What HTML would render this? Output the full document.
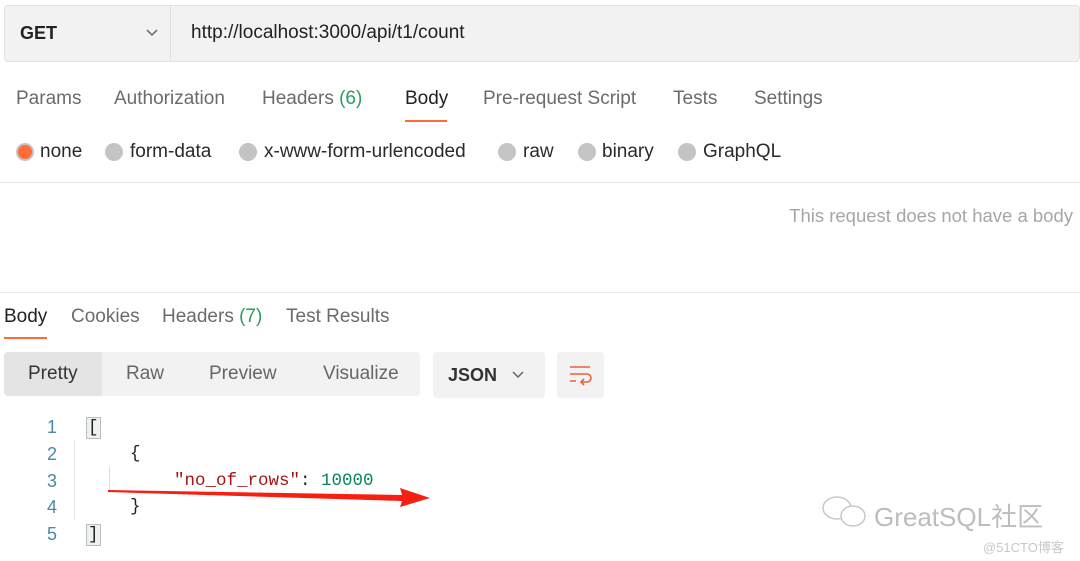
<!DOCTYPE html>
<html><head><meta charset="utf-8"><style>
*{margin:0;padding:0;box-sizing:border-box}
body{width:1080px;height:561px;background:#fff;font-family:"Liberation Sans",sans-serif;position:relative;overflow:hidden;color:#212121}
.a{position:absolute;white-space:nowrap}
.tab{font-size:19px;color:#6b6b6b;top:88px}
.rad{position:absolute;top:143px;width:18px;height:18px;border-radius:50%;background:#c4c4c4}
.rl{font-size:19px;color:#2a2a2a;top:141px}
.mono{font-family:"Liberation Mono",monospace;font-size:17.5px}
.ln{font-size:18px;color:#4a8aa8;left:47px}
</style></head><body>
<div class="a" style="left:4px;top:5px;width:1076px;height:57px;background:#f2f2f2;border:1px solid #e2e2e2;border-radius:4px"></div>
<div class="a" style="left:170px;top:6px;width:1px;height:55px;background:#e0e0e0"></div>
<div class="a" style="left:20px;top:23px;font-size:18px;font-weight:bold;color:#222">GET</div>
<svg class="a" style="left:145px;top:28px" width="14" height="10"><path d="M2 2 L7 7 L12 2" stroke="#666" stroke-width="1.5" fill="none"/></svg>
<div class="a" style="left:191px;top:22px;font-size:19px;color:#222">http://localhost:3000/api/t1/count</div>

<div class="a tab" style="left:16px">Params</div>
<div class="a tab" style="left:114px">Authorization</div>
<div class="a tab" style="left:262px">Headers <span style="color:#2a9d5c">(6)</span></div>
<div class="a tab" style="left:405px;color:#222">Body</div>
<div class="a" style="left:405px;top:120px;width:42px;height:2px;background:#ff6c37"></div>
<div class="a tab" style="left:483px">Pre-request Script</div>
<div class="a tab" style="left:673px">Tests</div>
<div class="a tab" style="left:754px">Settings</div>

<div class="rad" style="left:16px;background:#ff6c37;border:2px solid #c4c4c4"></div><div class="a rl" style="left:40px">none</div>
<div class="rad" style="left:105px"></div><div class="a rl" style="left:130px">form-data</div>
<div class="rad" style="left:239px"></div><div class="a rl" style="left:264px">x-www-form-urlencoded</div>
<div class="rad" style="left:498px"></div><div class="a rl" style="left:523px">raw</div>
<div class="rad" style="left:578px"></div><div class="a rl" style="left:602px">binary</div>
<div class="rad" style="left:678px"></div><div class="a rl" style="left:703px">GraphQL</div>
<div class="a" style="left:0;top:182px;width:1080px;height:1px;background:#e6e6e6"></div>
<div class="a" style="right:7px;top:205px;font-size:18.5px;color:#a6a6a6">This request does not have a body</div>
<div class="a" style="left:0;top:292px;width:1080px;height:1px;background:#ececec"></div>

<div class="a tab" style="left:4px;top:306px;color:#222">Body</div>
<div class="a" style="left:4px;top:337px;width:43px;height:2px;background:#ff6c37"></div>
<div class="a tab" style="left:71px;top:306px">Cookies</div>
<div class="a tab" style="left:162px;top:306px">Headers <span style="color:#2a9d5c">(7)</span></div>
<div class="a tab" style="left:286px;top:306px">Test Results</div>

<div class="a" style="left:4px;top:352px;width:416px;height:44px;background:#f2f2f2;border-radius:4px"></div>
<div class="a" style="left:4px;top:352px;width:98px;height:44px;background:#e4e4e4;border-radius:4px 0 0 4px"></div>
<div class="a" style="left:28px;top:363px;font-size:19px;color:#333">Pretty</div>
<div class="a" style="left:126px;top:363px;font-size:19px;color:#666">Raw</div>
<div class="a" style="left:209px;top:363px;font-size:19px;color:#666">Preview</div>
<div class="a" style="left:323px;top:363px;font-size:19px;color:#666">Visualize</div>
<div class="a" style="left:433px;top:352px;width:112px;height:46px;background:#f2f2f2;border-radius:4px"></div>
<div class="a" style="left:448px;top:365px;font-size:18px;font-weight:bold;color:#333">JSON</div>
<svg class="a" style="left:511px;top:370px" width="14" height="10"><path d="M2 2 L7 7 L12 2" stroke="#666" stroke-width="1.5" fill="none"/></svg>
<div class="a" style="left:557px;top:352px;width:47px;height:46px;background:#f2f2f2;border-radius:4px"></div>
<svg class="a" style="left:568px;top:364px" width="26" height="22"><path d="M2 3H22M2 10H19a4 4 0 0 1 0 8H13M16 15l-3 3 3 3M2 17H8" stroke="#e8623a" stroke-width="1.6" fill="none"/></svg>

<div class="a ln" style="top:417px">1</div>
<div class="a ln" style="top:444px">2</div>
<div class="a ln" style="top:471px">3</div>
<div class="a ln" style="top:497px">4</div>
<div class="a ln" style="top:524px">5</div>
<div class="a" style="left:74px;top:440px;width:1px;height:80px;background:#e4e4e4"></div>
<div class="a" style="left:109px;top:467px;width:1px;height:26px;background:#ddd"></div>
<div class="a mono" style="left:86px;top:417px;color:#222;background:#eef2ee;border:1px solid #bbb;padding:0 1px">[</div>
<div class="a mono" style="left:130px;top:444px;color:#222">{</div>
<div class="a mono" style="left:174px;top:471px"><span style="color:#a31515">"no_of_rows"</span><span style="color:#222">: </span><span style="color:#098658">10000</span></div>
<div class="a mono" style="left:130px;top:497px;color:#222">}</div>
<div class="a mono" style="left:86px;top:524px;color:#222;background:#eef2ee;border:1px solid #bbb;padding:0 1px">]</div>
<svg class="a" style="left:100px;top:480px" width="340" height="30"><path d="M8 10 L302 15 L300 8 L330 18 L300 27 L302 21 L8 12Z" fill="#f81e12"/></svg>

<div class="a" style="left:874px;top:497px;font-size:26px;color:#bdbdbd">GreatSQL<span style="font-family:'Noto Sans CJK SC',sans-serif">社区</span></div>
<svg class="a" style="left:820px;top:494px" width="50" height="36"><ellipse cx="17" cy="14" rx="14" ry="11" fill="none" stroke="#c8c8c8" stroke-width="1.5"/><ellipse cx="33" cy="22" rx="12" ry="10" fill="#fff" stroke="#c8c8c8" stroke-width="1.5"/></svg>
<div class="a" style="left:983px;top:537px;font-size:13px;color:#c8c8c8">@51CTO<span style="font-family:'Noto Sans CJK SC',sans-serif">博客</span></div>
</body></html>
